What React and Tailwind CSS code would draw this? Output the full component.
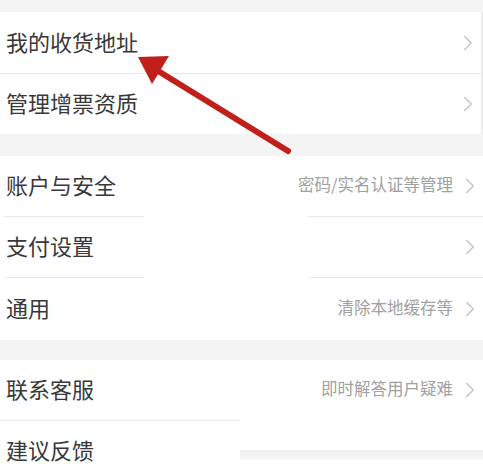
import { ChevronRight } from 'lucide-react';

const font = { fontFamily: '"Noto Sans CJK SC", "Noto Sans", sans-serif' };

const Row = ({ title, hint, h = 'h-[61px]' }) => (
  <div className={`flex items-center justify-between bg-white pl-[6px] pr-0 ${h}`}>
    <span className="text-[22px] text-[#383838] leading-none -mt-[4px]">{title}</span>
    <div className="flex items-center gap-[4px]">
      {hint && <span className="text-[16.5px] text-[#a0a0a0] leading-none -mt-[3px]">{hint}</span>}
      <ChevronRight size={26} strokeWidth={1.5} className="text-[#c6c6c6]" />
    </div>
  </div>
);

const Divider = () => (
  <div className="flex h-px bg-white">
    <div className="w-[4px]" />
    <div className="w-[140px] bg-[#e9e9e9]" />
    <div className="w-[164px]" />
    <div className="flex-1 bg-[#e9e9e9]" />
  </div>
);

const Arrow = () => (
  <svg className="absolute left-0 top-0 pointer-events-none" width="483" height="475">
    <line x1="288" y1="151" x2="150" y2="66" stroke="#c11f1a" strokeWidth="6" strokeLinecap="round" />
    <polygon points="138,57 169,56 152,84" fill="#c11f1a" />
  </svg>
);

export default function App() {
  return (
    <div className="relative w-[483px] h-[475px] overflow-hidden bg-[#f4f4f4] pt-[12px]" style={font}>
      <div className="border-r-2 border-[#ececec]">
        <Row title="我的收货地址" />
        <div className="h-px bg-[#e9e9e9]" />
        <Row title="管理增票资质" h="h-[60px]" />
      </div>

      <div className="h-[22px]" />

      <div>
        <Row title="账户与安全" hint="密码/实名认证等管理" h="h-[60px]" />
        <Divider />
        <Row title="支付设置" h="h-[60px]" />
        <Divider />
        <Row title="通用" hint="清除本地缓存等" h="h-[62px]" />
      </div>

      <div className="h-[20px]" />

      <div>
        <Row title="联系客服" hint="即时解答用户疑难" h="h-[60px]" />
        <div className="flex h-px bg-white">
          <div className="w-[240px] bg-[#ececec]" />
          <div className="flex-1" />
        </div>
        <div className="flex h-[60px] bg-white">
          <div className="w-[240px] flex items-center pl-[6px]">
            <span className="text-[22px] text-[#383838] leading-none -mt-[4px]">建议反馈</span>
          </div>
          <div className="flex-1 pt-[29px]">
            <div className="h-[10px] bg-gradient-to-b from-[#eeeeee] to-[#f8f8f8]" />
          </div>
        </div>
      </div>

      <Arrow />
    </div>
  );
}
